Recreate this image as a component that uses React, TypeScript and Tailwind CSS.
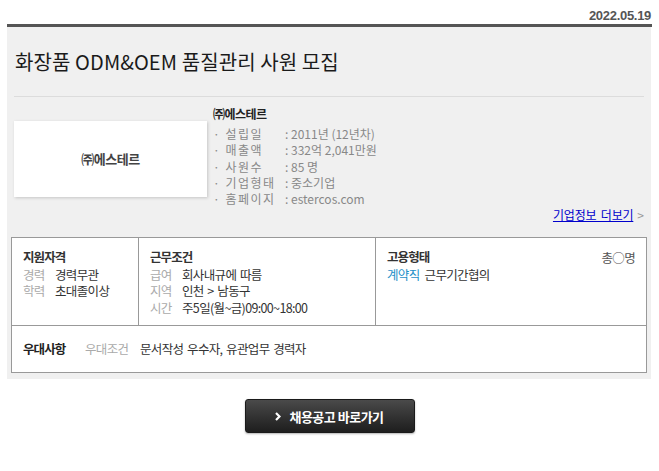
import React from "react";

const infoRows: [string, string][] = [
  ["설립일", ": 2011년 (12년차)"],
  ["매출액", ": 332억 2,041만원"],
  ["사원수", ": 85 명"],
  ["기업형태", ": 중소기업"],
  ["홈페이지", ": estercos.com"],
];

const Field = ({ label, value }: { label: string; value: string }) => (
  <div className="flex h-[16.5px] items-center whitespace-nowrap leading-[16px]">
    <span className="w-[32px] text-[#aaa]">{label}</span>
    <span className="text-[#333]">{value}</span>
  </div>
);

const App: React.FC = () => {
  return (
    <div
      className="w-[659px] h-[471px] bg-white"
      style={{ fontFamily: '"Noto Sans CJK KR", "Liberation Sans", sans-serif' }}
    >
      <div className="ml-[7px] w-[645px] pt-[7px]">
        <div className="h-[17px] text-right pr-[1px] text-[13px] font-bold leading-[17px] text-[#555] tracking-[-0.3px]" style={{ fontFamily: '"Liberation Sans", sans-serif' }}>
          2022.05.19
        </div>
        <div className="h-[3px] bg-[#555]" />

        <div className="bg-[#f0f0f0] px-[7px] pb-[6px] w-[644px]">
          {/* title */}
          <div className="flex h-[70px] items-center border-b border-[#dcdcdc] pl-[1px] text-[20px] text-[#1a1a1a] tracking-[0.1px]">
            화장품 ODM&amp;OEM 품질관리 사원 모집
          </div>

          {/* company */}
          <div className="flex">
            <div className="mt-[24px] flex h-[76px] w-[193px] items-center justify-center bg-white shadow-[1px_1px_3px_rgba(0,0,0,0.18)] text-[13px] font-bold text-[#444] tracking-[-0.5px]">
              ㈜에스테르
            </div>
            <div className="ml-[6px] pt-[9px] text-[12px]">
              <div className="h-[16px] leading-[16px] font-bold text-[#222] tracking-[-0.5px]">㈜에스테르</div>
              <div className="mt-[4px] text-[#888]">
                {infoRows.map(([k, v]) => (
                  <div key={k} className="flex h-[16.25px] items-center whitespace-nowrap leading-[16px]">
                    <span className="w-[72px] tracking-[1.5px]">· {k}</span>
                    <span>{v}</span>
                  </div>
                ))}
              </div>
            </div>
          </div>

          <div className="flex h-[16px] items-center justify-end text-[12px] leading-[16px]">
            <a href="#" className="text-[#0000cc] underline tracking-[-0.2px] [word-spacing:2px]">기업정보 더보기</a>
            <span className="ml-[4px] text-[#999]">&gt;</span>
          </div>

          {/* table */}
          <div className="-mx-[3px] mt-[14px] border border-[#999] bg-white text-[12.5px] tracking-[-0.65px] [word-spacing:1.5px]">
            <div className="flex h-[88px] border-b border-[#999]">
              <div className="w-[127px] border-r border-[#999] pl-[11px] pt-[11px]">
                <div className="mb-[1px] h-[16px] leading-[16px] font-bold text-[#333] tracking-[-0.9px]">지원자격</div>
                <Field label="경력" value="경력무관" />
                <Field label="학력" value="초대졸이상" />
              </div>
              <div className="w-[237px] border-r border-[#999] pl-[11px] pt-[11px]">
                <div className="mb-[1px] h-[16px] leading-[16px] font-bold text-[#333] tracking-[-0.9px]">근무조건</div>
                <Field label="급여" value="회사내규에 따름" />
                <Field label="지역" value="인천 > 남동구" />
                <Field label="시간" value="주5일(월~금)09:00~18:00" />
              </div>
              <div className="flex flex-1 justify-between pl-[11px] pr-[11px] pt-[11px]">
                <div>
                  <div className="mb-[1px] h-[16px] leading-[16px] font-bold text-[#333] tracking-[-0.9px]">고용형태</div>
                  <div className="flex h-[16.5px] items-center leading-[16px]">
                    <span className="text-[#1e90c8]">계약직</span>
                    <span className="ml-[5px] text-[#333]">근무기간협의</span>
                  </div>
                </div>
                <div className="pt-[1px] leading-[16px] text-[#555]">총○명</div>
              </div>
            </div>
            <div className="flex h-[46px] items-center pl-[11px] leading-[16px]">
              <span className="w-[62px] font-bold text-[#222] tracking-[-0.9px]">우대사항</span>
              <span className="w-[55px] text-[#aaa]">우대조건</span>
              <span className="text-[#333]">문서작성 우수자, 유관업무 경력자</span>
            </div>
          </div>
        </div>
      </div>

      {/* button */}
      <div className="mt-[20px] flex justify-center">
        <a
          href="#"
          className="flex h-[34px] w-[170px] items-center justify-center gap-[8px] rounded-[3px] border border-[#1a1a1a] bg-gradient-to-b from-[#4a4a4a] to-[#1e1e1e] text-[13px] font-bold text-white shadow-[0_1px_2px_rgba(0,0,0,0.3)] tracking-[-0.5px]"
        >
          <svg width="6" height="9" viewBox="0 0 6 9">
            <path d="M1 1l3.5 3.5L1 8" stroke="#fff" strokeWidth="2.2" fill="none" />
          </svg>
          채용공고 바로가기
        </a>
      </div>
    </div>
  );
};

export default App;
